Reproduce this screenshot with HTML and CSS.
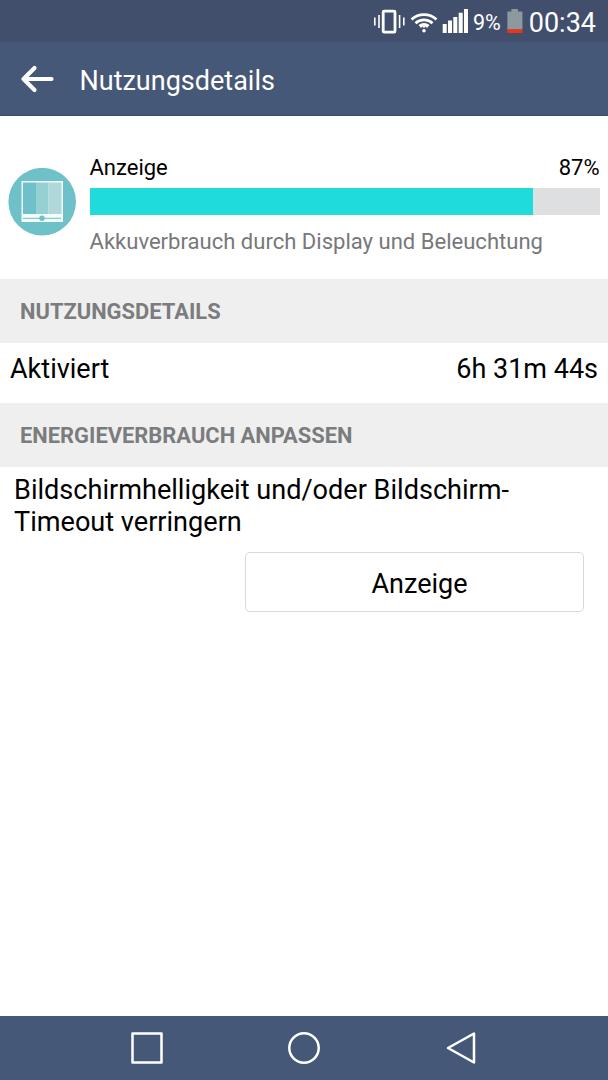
FILE: index.html
```html
<!DOCTYPE html>
<html lang="de">
<head>
    <meta charset="UTF-8">
    <title>Nutzungsdetails</title>
    <link rel="stylesheet" href="styles.css">
</head>
<body>
    <div class="statusbar">
        <svg class="status-icons" width="96" height="42" viewBox="0 0 96 42">
            <!-- Vibration -->
            <rect x="11.2" y="11.2" width="11.8" height="21" rx="1" fill="none" stroke="#fff" stroke-width="2.8"/>
            <path d="M7 15v13M2.8 17.5v8M27.6 15v13M31.8 17.5v8" stroke="#fff" stroke-width="1.6"/>
            <!-- WLAN -->
            <path d="M39.5 19.5a18.500 18.500 0 0 1 25 0M43.500 23.300a12.500 12.500 0 0 1 17 0" fill="none" stroke="#fff" stroke-width="2.8"/>
            <path d="M46.500 25a9 9 0 0 1 11 0l-2.500 3-1.500-1.500-1.500 1.700-1.500-1.700-1.500 1.500z" fill="#fff"/>
            <circle cx="52" cy="30.8" r="1.8" fill="#fff"/>
            <!-- Empfang -->
            <path d="M70.700 24h4v9h-4zM76 20.500h4v12.500h-4zM81.300 17h4v16h-4zM86.700 12.700h4v20.300h-4zM92 9h4v24h-4z" fill="#fff"/>
        </svg>
        <span class="battery-level">9%</span>
        <svg class="battery" width="16" height="42" viewBox="0 0 16 42">
            <path d="M.4 11.500h4v-2.500h6.500v2.500h4.500v18h-15z" fill="#8e989f"/>
            <path d="M.4 29.500h15v3.500h-15z" fill="#f5330a"/>
        </svg>
        <span class="clock">00:34</span>
    </div>
    <header>
        <svg class="back" width="34" height="28" viewBox="0 0 34 28">
            <path d="M14.500 3L3.500 14l11 11M4 14h27.500" fill="none" stroke="#fff" stroke-width="4.2" stroke-linecap="round" stroke-linejoin="round"/>
        </svg>
        <h1>Nutzungsdetails</h1>
    </header>
    <main>
        <section class="usage">
            <svg class="usage-icon" width="68" height="68" viewBox="0 0 68 68">
                <circle cx="34.2" cy="33.7" r="33.8" fill="#6ec1c8"/>
                <rect x="13.5" y="13" width="41.5" height="41" fill="#f4fbfb"/>
                <path d="M15 14.500h13v31.500h-13z" fill="#6ec1c8"/>
                <path d="M28 14.500h12.500v31.500h-12.500z" fill="#95d0d2"/>
                <path d="M40.500 14.500h13v31.500h-13z" fill="#b0d8da"/>
                <path d="M15 50.300h38" stroke="#6ec1c8" stroke-width="1"/>
                <circle cx="34" cy="50.2" r="2.7" fill="#6ec1c8"/>
            </svg>
            <div class="usage-info">
                <div class="usage-title">
                    <span>Anzeige</span>
                    <span>87%</span>
                </div>
                <div class="bar">
                    <div class="bar-fill" style="width: 87%"></div>
                </div>
                <p>Akkuverbrauch durch Display und Beleuchtung</p>
            </div>
        </section>
        <h2>NUTZUNGSDETAILS</h2>
        <div class="row">
            <span>Aktiviert</span>
            <span>6h 31m 44s</span>
        </div>
        <h2>ENERGIEVERBRAUCH ANPASSEN</h2>
        <section class="adjust">
            <p>Bildschirmhelligkeit und/oder Bildschirm-<br>Timeout verringern</p>
            <button>Anzeige</button>
        </section>
    </main>
    <nav>
        <svg width="34" height="34" viewBox="0 0 34 34">
            <rect x="2.5" y="2.5" width="29" height="29"/>
        </svg>
        <svg width="34" height="34" viewBox="0 0 34 34">
            <circle cx="17" cy="17" r="14.7"/>
        </svg>
        <svg width="34" height="34" viewBox="0 0 34 34">
            <path d="M30 2.500v29L4 17z"/>
        </svg>
    </nav>
</body>
</html>
```

FILE: styles.css
```css
* {
    box-sizing: border-box;
}
body {
    display: flex;
    flex-direction: column;
    height: 1080px;
    margin: 0;
    background: #fff;
    color: #000;
    font-family: Roboto, sans-serif;
}
h1, h2, p {
    margin: 0;
    font-weight: 400;
}
svg {
    display: block;
    flex: none;
}
.statusbar {
    display: flex;
    justify-content: flex-end;
    height: 42px;
    padding-right: 12px;
    background: #414f6d;
    color: #fff;
    line-height: 45px;
}
.battery-level {
    margin-left: 5px;
    font-size: 21.5px;
}
.battery {
    margin: 0 6px 0 6px;
}
.clock {
    font-size: 27px;
    line-height: 46px;
}
header {
    display: flex;
    align-items: center;
    height: 74px;
    padding: 1px 20px 0;
    border-bottom: 1px solid #3d4c6b;
    background: #465877;
    color: #fff;
}
h1 {
    padding-top: 3px;
    margin-left: 25.5px;
    font-size: 27px;
}
main {
    flex: 1;
}
.usage {
    display: flex;
    height: 163px;
    padding: 39px 8.5px 0 8px;
}
.usage-icon {
    margin-top: 13px;
}
.usage-info {
    flex: 1;
    margin-left: 13.5px;
    font-size: 22px;
}
.usage-title {
    display: flex;
    justify-content: space-between;
    height: 33px;
    line-height: 26px;
}
.bar {
    height: 27px;
    background: #dedfe1;
}
.bar-fill {
    height: 100%;
    background: #1fdbdc;
}
.usage p {
    margin-top: 14px;
    color: #77787a;
    font-size: 22.05px;
    line-height: 26px;
}
h2 {
    height: 64px;
    padding-left: 20px;
    background: #efefef;
    color: #7b7c7e;
    font-size: 21.9px;
    font-weight: 700;
    line-height: 65px;
}
.row {
    display: flex;
    justify-content: space-between;
    height: 60px;
    padding: 0 10px;
    font-size: 27px;
    line-height: 53px;
}
.adjust {
    display: flex;
    flex-direction: column;
    padding: 7px 24px 0 14px;
    font-size: 27px;
    line-height: 32px;
}
.adjust p {
    font-size: 27.1px;
}
button {
    align-self: flex-end;
    width: 339px;
    height: 60px;
    margin-top: 14px;
    padding: 3px 0 0 10px;
    border: 1px solid #d5dada;
    border-radius: 5px;
    background: #fff;
    color: #000;
    font: inherit;
}
nav {
    display: flex;
    justify-content: center;
    align-items: center;
    gap: 123px;
    height: 64px;
    background: #465877;
}
nav svg {
    fill: none;
    stroke: #fff;
    stroke-width: 2.5;
    stroke-linejoin: round;
}
```
